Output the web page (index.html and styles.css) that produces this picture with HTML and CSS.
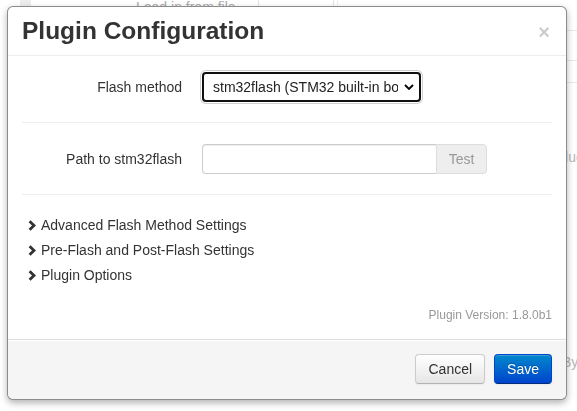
FILE: index.html
```html
<!DOCTYPE html>
<html>
<head>
<meta charset="utf-8">
<link rel="stylesheet" href="styles.css">
</head>
<body>
<div class="page">
  <div class="bg-main">
    <div class="bg-top">
      <span class="bg-tab"></span>
      <span class="bg-label">Load in from file</span>
      <span class="bg-btn">Browse...</span>
      <span class="bg-sep"></span>
    </div>
  </div>
  <div class="bg-side">
    <div class="bg-line l1"></div>
    <div class="bg-line l2"></div>
    <div class="bg-line l3"></div>
    <div class="bg-text t1">Value</div>
    <div class="bg-text t2">By</div>
  </div>
</div>

<div class="modal">
  <div class="modal-header">
    <h3>Plugin Configuration</h3>
    <span class="close">×</span>
  </div>
  <div class="modal-body">
    <div class="control-group">
      <label class="control-label">Flash method</label>
      <div class="controls">
        <div class="select">
          <span class="select-text">stm32flash (STM32 built-in bo</span>
          <svg class="select-arrow" width="10" height="6" viewBox="0 0 10 6"><polyline points="1,1 5,5 9,1" fill="none" stroke="#000" stroke-width="1.8"/></svg>
        </div>
      </div>
    </div>
    <hr>
    <div class="control-group">
      <label class="control-label">Path to stm32flash</label>
      <div class="controls input-append">
        <span class="input"></span>
        <span class="btn-test">Test</span>
      </div>
    </div>
    <hr>
    <div class="toggles">
      <div class="toggle"><svg class="chev" width="8" height="11" viewBox="0 0 8 11"><polyline points="1.6,1.2 6,5.5 1.6,9.8" fill="none" stroke="#333" stroke-width="2.8"/></svg>Advanced Flash Method Settings</div>
      <div class="toggle"><svg class="chev" width="8" height="11" viewBox="0 0 8 11"><polyline points="1.6,1.2 6,5.5 1.6,9.8" fill="none" stroke="#333" stroke-width="2.8"/></svg>Pre-Flash and Post-Flash Settings</div>
      <div class="toggle"><svg class="chev" width="8" height="11" viewBox="0 0 8 11"><polyline points="1.6,1.2 6,5.5 1.6,9.8" fill="none" stroke="#333" stroke-width="2.8"/></svg>Plugin Options</div>
    </div>
    <div class="version">Plugin Version: 1.8.0b1</div>
  </div>
  <div class="modal-footer">
    <span class="btn">Cancel</span>
    <span class="btn btn-primary">Save</span>
  </div>
</div>
</body>
</html>
```

FILE: styles.css
```css
html, body {
  margin: 0;
  padding: 0;
  background: #fff;
  font-family: "Liberation Sans", Arial, sans-serif;
  font-size: 14px;
  color: #333;
}

.page {
  display: grid;
  grid-template-columns: 567px 1fr;
  height: 411px;
  overflow: hidden;
}

.bg-main {
  overflow: hidden;
}

.bg-top {
  display: flex;
  align-items: flex-end;
  height: 6px;
  overflow: hidden;
}

.bg-tab {
  width: 11px;
  height: 20px;
  margin-left: 20px;
  background: #ececec;
}

.bg-label {
  margin-left: 105px;
  color: #aaa;
  line-height: 20px;
  position: relative;
  top: 11px;
  height: 20px;
}

.bg-btn {
  margin-left: 22px;
  width: 76px;
  height: 30px;
  border: 1px solid #e2e2e2;
  color: #aaa;
  line-height: 20px;
  padding-left: 12px;
  box-sizing: border-box;
  position: relative;
  top: 5px;
}

.bg-sep {
  margin-left: 3px;
  width: 1px;
  height: 20px;
  background: #eee;
}

.bg-side {
  overflow: hidden;
  display: flex;
  flex-direction: column;
}

.bg-line {
  height: 1px;
  background: #e8e8e8;
}

.l1 { margin-top: 30px; }
.l2 { margin-top: 29px; }
.l3 { margin-top: 21px; }

.bg-text {
  color: #b5b5b5;
  white-space: nowrap;
  line-height: 20px;
}

.t1 {
  margin-top: 64px;
  margin-left: -18px;
}

.t2 {
  margin-top: 185px;
  margin-left: -5px;
}

.modal {
  position: fixed;
  left: 7px;
  top: 6px;
  width: 560px;
  box-sizing: border-box;
  background: #fff;
  border: 1px solid rgba(0, 0, 0, 0.45);
  border-radius: 6px;
  box-shadow: 0 3px 7px rgba(0, 0, 0, 0.3);
}

.modal-header {
  display: flex;
  align-items: center;
  justify-content: space-between;
  padding: 9px 15px 9px 14px;
  border-bottom: 1px solid #eee;
}

.modal-header h3 {
  margin: 0;
  font-size: 24.5px;
  line-height: 30px;
  font-weight: bold;
  color: #333;
}

.close {
  font-size: 20px;
  font-weight: bold;
  line-height: 20px;
  color: #000;
  opacity: 0.2;
  margin-right: 1px;
  margin-top: 2px;
}

.modal-body {
  padding: 15px 14px 14px 14px;
}

.control-group {
  display: flex;
  align-items: center;
  margin-bottom: 0;
}

.control-label {
  width: 160px;
  text-align: right;
  margin-right: 20px;
  line-height: 20px;
}

.controls {
  display: flex;
}

.select {
  display: flex;
  align-items: center;
  justify-content: space-between;
  box-sizing: border-box;
  width: 219px;
  height: 30px;
  margin-top: 1px;
  padding: 0 5px 0 9px;
  border: 2px solid #101010;
  border-radius: 4px;
  box-shadow: 0 0 0 1px #fff, 0 0 0 2px #d0d0d0;
  color: #222;
  white-space: nowrap;
  overflow: hidden;
}

.select-text {
  overflow: hidden;
  width: 185px;
}

.select-arrow {
  flex: none;
}

hr {
  margin: 20px 0;
  border: 0;
  border-top: 1px solid #eee;
  border-bottom: 1px solid #fff;
}

.input-append {
  display: flex;
}

.input {
  box-sizing: border-box;
  width: 234px;
  height: 30px;
  border: 1px solid #ccc;
  border-right: 0;
  border-radius: 4px 0 0 4px;
  box-shadow: inset 0 1px 1px rgba(0, 0, 0, 0.075);
}

.btn-test {
  box-sizing: border-box;
  width: 51px;
  height: 30px;
  border: 1px solid #ddd;
  border-radius: 0 4px 4px 0;
  background: #eee;
  color: #999;
  text-align: center;
  line-height: 28px;
}

.toggles {
  display: flex;
  flex-direction: column;
  gap: 5px;
  padding-left: 6px;
  margin-top: -1px;
}

.toggle {
  display: flex;
  align-items: center;
  line-height: 20px;
}

.chev {
  margin-right: 5px;
}

.version {
  text-align: right;
  font-size: 12px;
  color: #999;
  margin-top: 20px;
  line-height: 20px;
}

.modal-footer {
  display: flex;
  justify-content: flex-end;
  gap: 9px;
  padding: 14px 14px 15px;
  background: #f5f5f5;
  border-top: 1px solid #ddd;
  border-radius: 0 0 6px 6px;
  box-shadow: inset 0 1px 0 #fff;
}

.btn {
  box-sizing: border-box;
  height: 30px;
  padding: 4px 12px;
  line-height: 20px;
  font-size: 14px;
  color: #333;
  border: 1px solid #ccc;
  border-bottom-color: #b3b3b3;
  border-radius: 4px;
  background: linear-gradient(#fff, #e6e6e6);
  box-shadow: inset 0 1px 0 rgba(255, 255, 255, 0.2), 0 1px 2px rgba(0, 0, 0, 0.05);
}

.btn-primary {
  color: #fff;
  background: linear-gradient(#0088cc, #0044cc);
  border-color: #0044cc #0044cc #002a80;
  text-shadow: 0 -1px 0 rgba(0, 0, 0, 0.25);
}
```
